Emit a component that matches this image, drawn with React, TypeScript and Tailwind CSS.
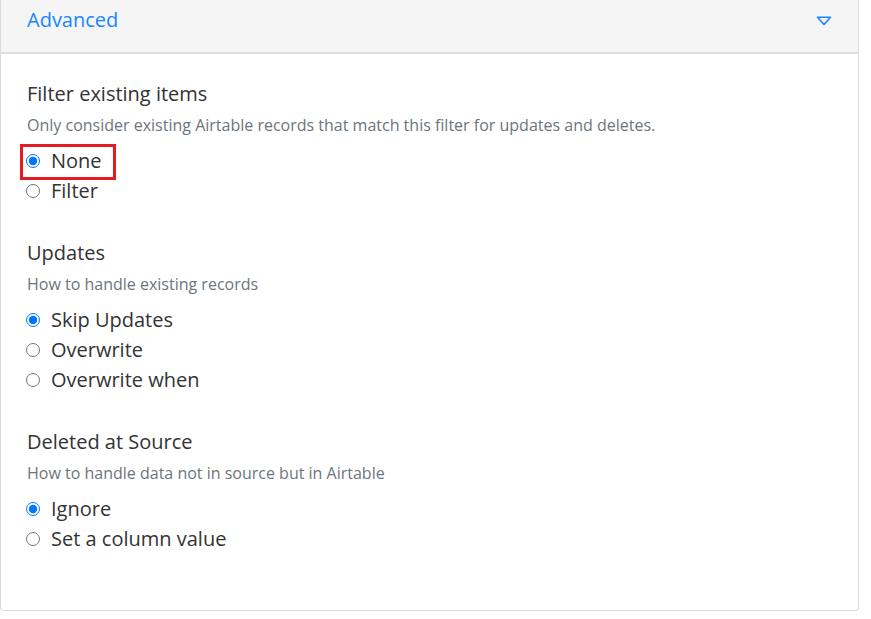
import { useState } from "react";

interface Option {
  value: string;
  label: string;
}

interface SectionProps {
  name: string;
  title: string;
  description: string;
  options: Option[];
  initial: string;
  highlight?: string;
  className?: string;
}

function RadioSection({ name, title, description, options, initial, highlight, className }: SectionProps) {
  const [selected, setSelected] = useState(initial);

  return (
    <div className={className}>
      <h3 className="text-[20px] leading-[28px] text-[#333]">{title}</h3>
      <p className="mt-[6px] text-[16px] leading-[22px] text-[#6c757d]">{description}</p>
      <div className="mt-[10px] flex flex-col">
        {options.map((opt) => (
          <label key={opt.value} className="relative flex h-[30px] items-center gap-[11px] cursor-pointer">
            {highlight === opt.value && (
              <span className="pointer-events-none absolute -left-[7px] -top-[2px] h-[36px] w-[96px] border-[3px] border-[#e31b23]" />
            )}
            <input
              type="radio"
              name={name}
              value={opt.value}
              checked={selected === opt.value}
              onChange={() => setSelected(opt.value)}
              className="h-[14px] w-[14px] -ml-[1px] accent-[#0075ff]"
            />
            <span className="text-[20px] leading-[30px] text-[#333]">{opt.label}</span>
          </label>
        ))}
      </div>
    </div>
  );
}

export default function App() {
  return (
    <div className="min-h-[619px] bg-white font-['Open_Sans',sans-serif]">
      <div className="w-[859px] rounded-b-[4px] border-x border-b border-[#dcdcdc]">
        <div className="flex h-[54px] items-center justify-between border-b-2 border-[#dedede] bg-[#f5f5f5] pl-[26px] pr-[26px] pb-[12px]">
          <span className="text-[20px] text-[#1a85ff]">Advanced</span>
          <svg width="16" height="10" viewBox="0 0 16 10" className="mt-[2px]" aria-hidden="true">
            <path d="M1.5 1.2 H14.5 L8 8.5 Z" fill="none" stroke="#1a85ff" strokeWidth="1.6" strokeLinejoin="round" />
          </svg>
        </div>
        <div className="pl-[26px] pr-6 pt-[26px] pb-[56px]">
          <RadioSection
            name="filter"
            title="Filter existing items"
            description="Only consider existing Airtable records that match this filter for updates and deletes."
            options={[
              { value: "none", label: "None" },
              { value: "filter", label: "Filter" },
            ]}
            initial="none"
            highlight="none"
          />
          <RadioSection
            className="mt-[33px]"
            name="updates"
            title="Updates"
            description="How to handle existing records"
            options={[
              { value: "skip", label: "Skip Updates" },
              { value: "overwrite", label: "Overwrite" },
              { value: "overwrite-when", label: "Overwrite when" },
            ]}
            initial="skip"
          />
          <RadioSection
            className="mt-[33px]"
            name="deleted"
            title="Deleted at Source"
            description="How to handle data not in source but in Airtable"
            options={[
              { value: "ignore", label: "Ignore" },
              { value: "set", label: "Set a column value" },
            ]}
            initial="ignore"
          />
        </div>
      </div>
    </div>
  );
}
